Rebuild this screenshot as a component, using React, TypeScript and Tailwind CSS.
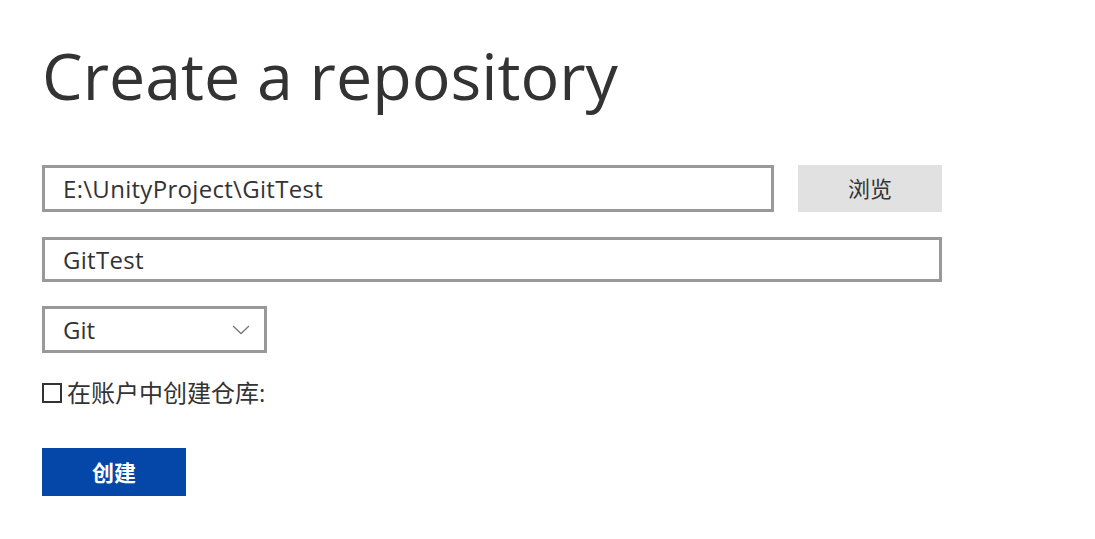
import React from "react";

export default function App() {
  const font = { fontFamily: '"Open Sans", "Noto Sans CJK SC", sans-serif' };
  return (
    <div className="w-[1095px] h-[539px] bg-white text-[#333333]" style={font}>
      <div className="pl-[42px] pt-[27px]">
        <h1 className="text-[64.5px] leading-[96px] font-normal">Create a repository</h1>
        <div className="mt-[42px] flex items-center gap-[24px]">
          <div className="w-[732px] h-[47px] border-[3px] border-[#999999] flex items-center pl-[18px] text-[24px] tracking-[0.3px]">
            E:\UnityProject\GitTest
          </div>
          <button className="w-[144px] h-[47px] bg-[#e1e1e1] text-[22px] flex items-center justify-center">浏览</button>
        </div>
        <div className="mt-[25px] w-[900px] h-[45px] border-[3px] border-[#999999] flex items-center pl-[18px] text-[24px] tracking-[0.3px]">
          GitTest
        </div>
        <div className="mt-[24px] w-[225px] h-[47px] border-[3px] border-[#999999] flex items-center justify-between pl-[18px] pr-[14px] text-[24px]">
          <span>Git</span>
          <svg width="18" height="10" viewBox="0 0 18 10" fill="none">
            <path d="M1 1 L9 8.5 L17 1" stroke="#777" strokeWidth="1.3" />
          </svg>
        </div>
        <div className="mt-[24px] flex items-center gap-[5px] text-[24px] leading-[32px]">
          <div className="w-[20px] h-[20px] border-2 border-[#333333]" />
          <span>在账户中创建仓库:</span>
        </div>
        <button className="mt-[39px] w-[144px] h-[48px] bg-[#0447a8] text-white text-[22px] font-bold flex items-center justify-center">
          创建
        </button>
      </div>
    </div>
  );
}
